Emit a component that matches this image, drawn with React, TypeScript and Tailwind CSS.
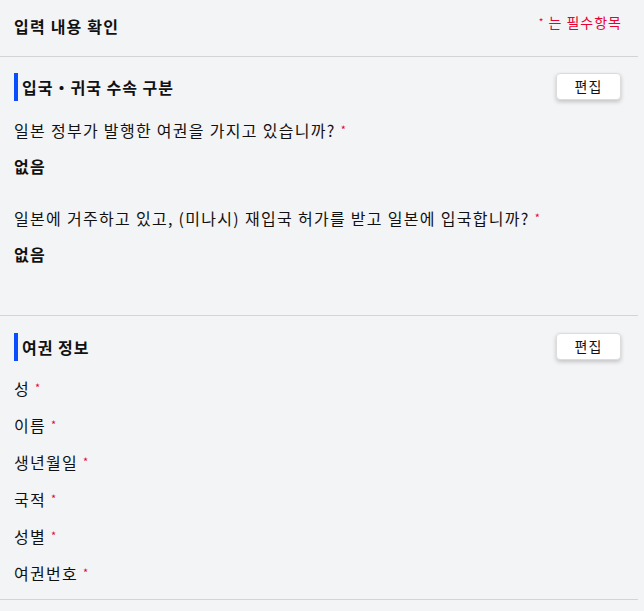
import React from 'react';

const font = {
  fontFamily: '"Noto Sans CJK KR", "Noto Sans", sans-serif',
};

const questions = [
  {
    label: '일본 정부가 발행한 여권을 가지고 있습니까?',
    answer: '없음',
  },
  {
    label: '일본에 거주하고 있고, (미나시) 재입국 허가를 받고 일본에 입국합니까?',
    answer: '없음',
  },
];

const passportFields = ['성', '이름', '생년월일', '국적', '성별', '여권번호'];

function Required() {
  return <span className="ml-[5px] align-top text-[11px] leading-[20px] text-[#e60033]">*</span>;
}

function SectionHeader({ title }: { title: string }) {
  return (
    <div className="flex h-[27px] items-center justify-between">
      <div className="flex h-full items-center">
        <span className="h-[28px] w-[4px] bg-[#0a4dff]" />
        <h2 className="ml-[4px] text-[16px] font-bold tracking-[1px] text-[#111]">{title}</h2>
      </div>
      <button
        className="h-[27px] w-[65px] rounded-[4px] border border-[#dcdcdc] bg-white text-[14px] tracking-[1px] text-[#111] shadow-[0_2px_4px_rgba(0,0,0,0.2)]"
        type="button"
      >
        편집
      </button>
    </div>
  );
}

export default function App() {
  return (
    <div className="min-h-[611px] bg-[#f3f4f6]" style={font}>
      <div className="w-[638px]">
        <header className="flex h-[57px] items-start justify-between border-b border-[#d4d4d8] pl-[14px] pr-[16px]">
          <h1 className="mt-[15px] text-[16px] font-bold leading-[22px] tracking-[1.2px] text-[#111]">
            입력 내용 확인
          </h1>
          <span className="mt-[12px] text-[14px] leading-[20px] tracking-[1px] text-[#e60033]">
            <span className="align-top text-[10px]">*</span> 는 필수항목
          </span>
        </header>

        <section className="border-b border-[#d4d4d8] pb-[50px] pl-[14px] pr-[17px] pt-[16px]">
          <SectionHeader title="입국・귀국 수속 구분" />
          <div className="mt-[19px]">
            {questions.map((question, index) => (
              <div className={index > 0 ? 'mt-[30px]' : ''} key={question.label}>
                <p className="text-[16px] leading-[22px] tracking-[1.3px] text-[#111]">
                  {question.label}
                  <Required />
                </p>
                <p className="mt-[14px] text-[16px] font-bold leading-[22px] tracking-[1.3px] text-[#111]">
                  {question.answer}
                </p>
              </div>
            ))}
          </div>
        </section>

        <section className="border-b border-[#d4d4d8] pb-[15px] pl-[14px] pr-[17px] pt-[17px]">
          <SectionHeader title="여권 정보" />
          <ul className="mt-[17px] flex flex-col gap-[15px]">
            {passportFields.map((field) => (
              <li className="text-[16px] leading-[22px] tracking-[1.3px] text-[#111]" key={field}>
                {field}
                <Required />
              </li>
            ))}
          </ul>
        </section>
      </div>
    </div>
  );
}
